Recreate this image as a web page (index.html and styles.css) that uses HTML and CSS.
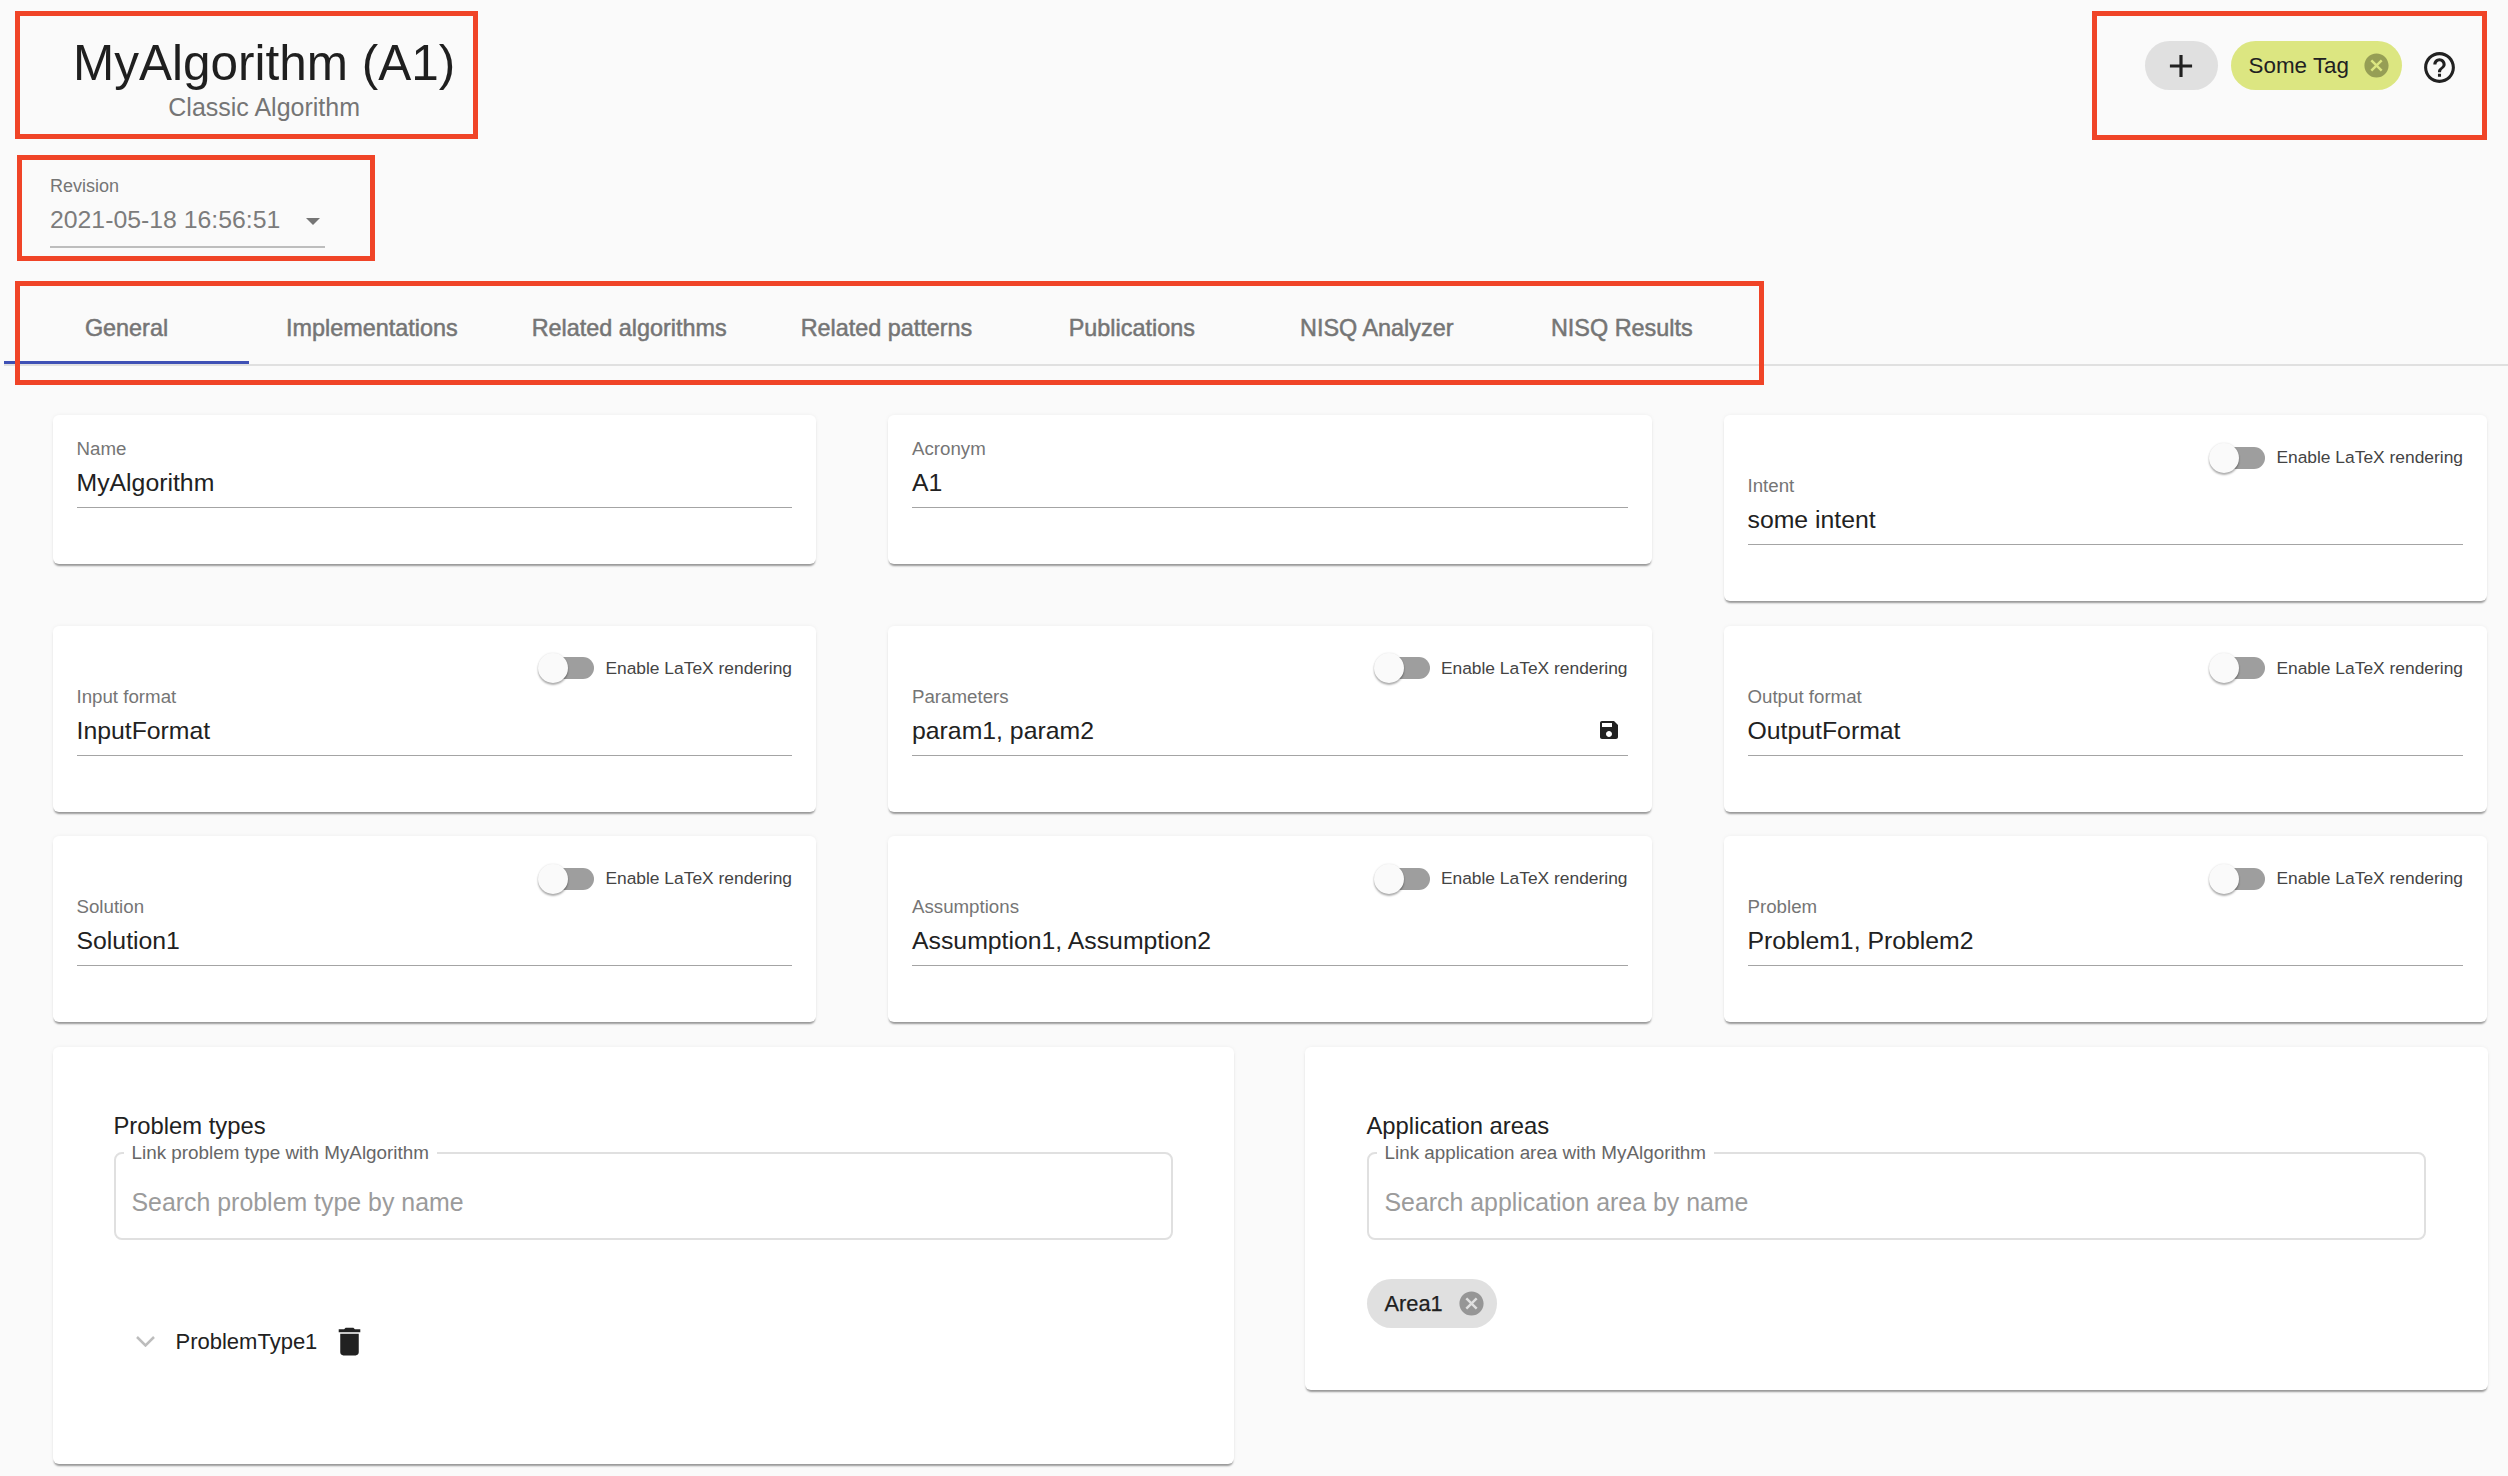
FILE: index.html
```html
<!DOCTYPE html>
<html lang="en">
<head>
<meta charset="utf-8">
<title>MyAlgorithm (A1)</title>
<link rel="stylesheet" href="styles.css">
</head>
<body>
<div class="page">
  <header class="header">
    <div class="title-block">
      <h1 class="title">MyAlgorithm (A1)</h1>
      <div class="subtitle">Classic Algorithm</div>
    </div>
    <div class="tools">
      <span class="chip chip-add">
        <svg class="icon-add" viewBox="0 0 24 24"><path d="M19 13h-6v6h-2v-6H5v-2h6V5h2v6h6v2z"/></svg>
      </span>
      <span class="chip chip-tag">Some Tag
        <svg class="icon-cancel icon-cancel-tag" viewBox="0 0 24 24"><path d="M12 2C6.47 2 2 6.47 2 12s4.47 10 10 10 10-4.47 10-10S17.53 2 12 2zm5 13.59L15.59 17 12 13.41 8.41 17 7 15.59 10.59 12 7 8.41 8.41 7 12 10.59 15.59 7 17 8.41 13.41 12 17 15.59z"/></svg>
      </span>
      <svg class="icon-help" viewBox="0 0 24 24"><path d="M11 18h2v-2h-2v2zm1-16C6.48 2 2 6.48 2 12s4.48 10 10 10 10-4.48 10-10S17.52 2 12 2zm0 18c-4.41 0-8-3.59-8-8s3.59-8 8-8 8 3.59 8 8-3.59 8-8 8zm0-14c-2.21 0-4 1.79-4 4h2c0-1.1.9-2 2-2s2 .9 2 2c0 2-3 1.75-3 5h2c0-2.25 3-2.5 3-5 0-2.21-1.79-4-4-4z"/></svg>
    </div>
  </header>

  <div class="revision">
    <div class="revision-label">Revision</div>
    <div class="revision-value"><span>2021-05-18 16:56:51</span><i class="arrow"></i></div>
  </div>

  <nav class="tabs">
    <div class="tab tab-active">General</div>
    <div class="tab">Implementations</div>
    <div class="tab">Related algorithms</div>
    <div class="tab">Related patterns</div>
    <div class="tab">Publications</div>
    <div class="tab">NISQ Analyzer</div>
    <div class="tab">NISQ Results</div>
  </nav>

  <section class="fields">
    <div class="card card-plain">
      <div class="field"><div class="field-label">Name</div><div class="field-value">MyAlgorithm</div></div>
    </div>
    <div class="card card-plain">
      <div class="field"><div class="field-label">Acronym</div><div class="field-value">A1</div></div>
    </div>
    <div class="card">
      <div class="latex"><span class="toggle"><i class="thumb"></i></span><span class="latex-text">Enable LaTeX rendering</span></div>
      <div class="field"><div class="field-label">Intent</div><div class="field-value">some intent</div></div>
    </div>

    <div class="card">
      <div class="latex"><span class="toggle"><i class="thumb"></i></span><span class="latex-text">Enable LaTeX rendering</span></div>
      <div class="field"><div class="field-label">Input format</div><div class="field-value">InputFormat</div></div>
    </div>
    <div class="card">
      <div class="latex"><span class="toggle"><i class="thumb"></i></span><span class="latex-text">Enable LaTeX rendering</span></div>
      <div class="field"><div class="field-label">Parameters</div>
        <div class="field-value field-value-icon">param1, param2
          <svg class="icon-save" viewBox="0 0 24 24"><path d="M17 3H5c-1.11 0-2 .9-2 2v14c0 1.1.89 2 2 2h14c1.1 0 2-.9 2-2V7l-4-4zm-5 16c-1.66 0-3-1.34-3-3s1.34-3 3-3 3 1.34 3 3-1.34 3-3 3zm3-10H5V5h10v4z"/></svg>
        </div>
      </div>
    </div>
    <div class="card">
      <div class="latex"><span class="toggle"><i class="thumb"></i></span><span class="latex-text">Enable LaTeX rendering</span></div>
      <div class="field"><div class="field-label">Output format</div><div class="field-value">OutputFormat</div></div>
    </div>

    <div class="card">
      <div class="latex"><span class="toggle"><i class="thumb"></i></span><span class="latex-text">Enable LaTeX rendering</span></div>
      <div class="field"><div class="field-label">Solution</div><div class="field-value">Solution1</div></div>
    </div>
    <div class="card">
      <div class="latex"><span class="toggle"><i class="thumb"></i></span><span class="latex-text">Enable LaTeX rendering</span></div>
      <div class="field"><div class="field-label">Assumptions</div><div class="field-value">Assumption1, Assumption2</div></div>
    </div>
    <div class="card">
      <div class="latex"><span class="toggle"><i class="thumb"></i></span><span class="latex-text">Enable LaTeX rendering</span></div>
      <div class="field"><div class="field-label">Problem</div><div class="field-value">Problem1, Problem2</div></div>
    </div>
  </section>

  <section class="links">
    <div class="link-card link-card-tree">
      <h2 class="link-title">Problem types</h2>
      <fieldset class="search">
        <legend class="search-legend">Link problem type with MyAlgorithm</legend>
        <div class="search-placeholder">Search problem type by name</div>
      </fieldset>
      <div class="tree-row">
        <svg class="icon-chevron" viewBox="0 0 19 11"><path d="M1 1l8.500 8.500L18 1"/></svg>
        <span class="tree-text">ProblemType1</span>
        <svg class="icon-delete" viewBox="0 0 24 24"><path d="M6 19c0 1.100.9 2 2 2h8c1.100 0 2-.9 2-2V7H6v12zM19 4h-3.500l-1-1h-5l-1 1H5v2h14V4z"/></svg>
      </div>
    </div>
    <div class="link-card link-card-chips">
      <h2 class="link-title">Application areas</h2>
      <fieldset class="search">
        <legend class="search-legend">Link application area with MyAlgorithm</legend>
        <div class="search-placeholder">Search application area by name</div>
      </fieldset>
      <div class="chip-row">
        <span class="chip chip-area">Area1
          <svg class="icon-cancel icon-cancel-area" viewBox="0 0 24 24"><path d="M12 2C6.47 2 2 6.47 2 12s4.47 10 10 10 10-4.47 10-10S17.53 2 12 2zm5 13.59L15.59 17 12 13.41 8.41 17 7 15.59 10.59 12 7 8.41 8.41 7 12 10.59 15.59 7 17 8.41 13.41 12 17 15.59z"/></svg>
        </span>
      </div>
    </div>
  </section>

  <div class="mark mark-title"></div>
  <div class="mark mark-revision"></div>
  <div class="mark mark-tabs"></div>
  <div class="mark mark-tools"></div>
</div>
</body>
</html>
```

FILE: styles.css
```css
* { box-sizing: border-box; }
html, body { margin: 0; padding: 0; }
body {
  background: #fafafa;
  color: #212121;
  font-family: "Liberation Sans", Arial, sans-serif;
}
.page {
  position: relative;
  width: 2508px;
  height: 1476px;
  overflow: hidden;
}

/* header */
.header {
  display: flex;
  justify-content: space-between;
  align-items: flex-start;
  height: 122px;
  padding: 35px 50px 0 73px;
}
.title-block { text-align: center; }
.title {
  margin: 0;
  font-size: 49.5px;
  line-height: 56px;
  font-weight: 400;
  color: #1f1f1f;
}
.subtitle {
  margin-top: 1px;
  font-size: 25px;
  line-height: 30px;
  color: #757575;
}
.tools {
  display: flex;
  align-items: flex-start;
  margin-top: 6px;
}
.chip {
  display: inline-flex;
  align-items: center;
  height: 49px;
  border-radius: 25px;
  font-size: 22.4px;
  background: #e0e0e0;
  color: #212121;
}
.chip-add {
  width: 73px;
  justify-content: center;
  margin-right: 13px;
}
.icon-add { width: 38px; height: 38px; fill: #212121; }
.chip-tag {
  background: #dce681;
  padding-left: 18px;
  padding-right: 11px;
  margin-right: 19px;
}
.icon-cancel { width: 29px; height: 29px; margin-left: 13px; }
.icon-cancel-tag { fill: #969e55; }
.icon-cancel-area { fill: #969696; margin-left: 14px; }
.icon-help {
  width: 37px;
  height: 37px;
  margin-top: 8px;
  fill: #212121;
}

/* revision */
.revision {
  width: 275px;
  margin: 53px 0 0 50px;
}
.revision-label {
  font-size: 18px;
  line-height: 22px;
  color: #757575;
}
.revision-value {
  display: flex;
  justify-content: space-between;
  align-items: flex-start;
  height: 43px;
  margin-top: 8px;
  padding-right: 5px;
  border-bottom: 2px solid #bdbdbd;
  font-size: 24.8px;
  line-height: 30px;
  color: #7c7c7c;
}
.arrow {
  width: 0;
  height: 0;
  margin-top: 13px;
  border-left: 7px solid transparent;
  border-right: 7px solid transparent;
  border-top: 7px solid #757575;
}

/* tabs */
.tabs {
  display: flex;
  height: 74px;
  margin: 44px 0 0 4px;
  border-bottom: 2px solid #e0e0e0;
}
.tab {
  display: flex;
  align-items: center;
  justify-content: center;
  min-width: 245px;
  height: 72px;
  padding: 3px 37px 0;
  border-bottom: 3px solid transparent;
  font-size: 23.4px;
  color: #757575;
  -webkit-text-stroke: 0.5px #757575;
  white-space: nowrap;
}
.tab-active { border-bottom-color: #3f51b5; }

/* field cards */
.fields {
  display: grid;
  grid-template-columns: repeat(3, 1fr);
  column-gap: 72px;
  row-gap: 24.5px;
  align-items: start;
  margin-top: 49px;
  padding: 0 21px 0 52.5px;
}
.card {
  padding: 24px 24px 56px;
  background: #fff;
  border-radius: 6px;
  box-shadow: 0 3px 2px -1px rgba(0, 0, 0, .38), 0 0 4px rgba(0, 0, 0, .05);
}
.latex {
  display: flex;
  justify-content: flex-end;
  align-items: center;
  height: 35px;
  margin-top: 1px;
  margin-bottom: 1px;
}
.card-plain { padding-bottom: 56px; }
.toggle {
  position: relative;
  width: 54px;
  height: 22px;
  border-radius: 11px;
  background: #9e9e9e;
}
.thumb {
  position: absolute;
  left: -2px;
  top: -4px;
  width: 30px;
  height: 30px;
  border-radius: 50%;
  background: #fafafa;
  box-shadow: 0 2px 2px rgba(0, 0, 0, .3), 0 0 2px rgba(0, 0, 0, .12);
}
.latex-text {
  margin-left: 11px;
  font-size: 17.4px;
  color: #444;
}
.field { border-bottom: 1px solid #a4a4a4; }
.field-label {
  font-size: 18.7px;
  line-height: 20px;
  color: #757575;
}
.field-value {
  margin-top: 9px;
  padding-bottom: 9px;
  font-size: 24.8px;
  line-height: 30px;
  color: #212121;
}
.field-value-icon {
  display: flex;
  justify-content: space-between;
  align-items: center;
}
.icon-save {
  width: 24px;
  height: 24px;
  margin-right: 7px;
  margin-bottom: 2px;
  fill: #212121;
}

/* link cards */
.links {
  display: grid;
  grid-template-columns: 1181px 1183px;
  column-gap: 71px;
  align-items: start;
  margin-top: 24.5px;
  padding-left: 52.5px;
}
.link-card {
  padding: 65px 62px 62px;
  background: #fff;
  border-radius: 6px;
  box-shadow: 0 3px 2px -1px rgba(0, 0, 0, .38), 0 0 4px rgba(0, 0, 0, .05);
}
.link-card-tree { padding: 65px 61px 98px; }
.link-title {
  margin: 0;
  font-size: 23.8px;
  line-height: 28px;
  font-weight: 400;
  color: #212121;
}
.search {
  margin: 3px 0 0;
  padding: 0 16px;
  min-width: 0;
  height: 97px;
  border: 2px solid #e0e0e0;
  border-radius: 8px;
}
.search-legend {
  margin-left: -8px;
  padding: 0 8px;
  font-size: 18.85px;
  line-height: 20px;
  color: #666;
}
.search-placeholder {
  margin-top: 24px;
  font-size: 24.9px;
  line-height: 30px;
  color: #9b9b9b;
}
.tree-row {
  display: flex;
  align-items: center;
  height: 48px;
  margin-top: 78px;
  padding-left: 22px;
}
.icon-chevron {
  width: 19px;
  height: 11px;
  fill: none;
  stroke: #bdbdbd;
  stroke-width: 2.5px;
}
.tree-text {
  margin-left: 21px;
  font-size: 22px;
  color: #212121;
}
.icon-delete {
  width: 37px;
  height: 37px;
  margin-left: 14px;
  fill: #212121;
}
.chip-row { margin-top: 39px; display: flex; }
.chip-area {
  padding-left: 18px;
  padding-right: 11px;
  padding-top: 1px;
  font-size: 21.8px;
  -webkit-text-stroke: 0.25px #212121;
}

/* red annotation frames laid over the screenshot */
.mark {
  position: absolute;
  border: 5px solid #f04427;
  pointer-events: none;
}
.mark-title { left: 15px; top: 11px; width: 463px; height: 128px; }
.mark-revision { left: 17px; top: 155px; width: 358px; height: 106px; }
.mark-tabs { left: 15px; top: 281px; width: 1749px; height: 104px; }
.mark-tools { left: 2092px; top: 11px; width: 395px; height: 129px; }
```
